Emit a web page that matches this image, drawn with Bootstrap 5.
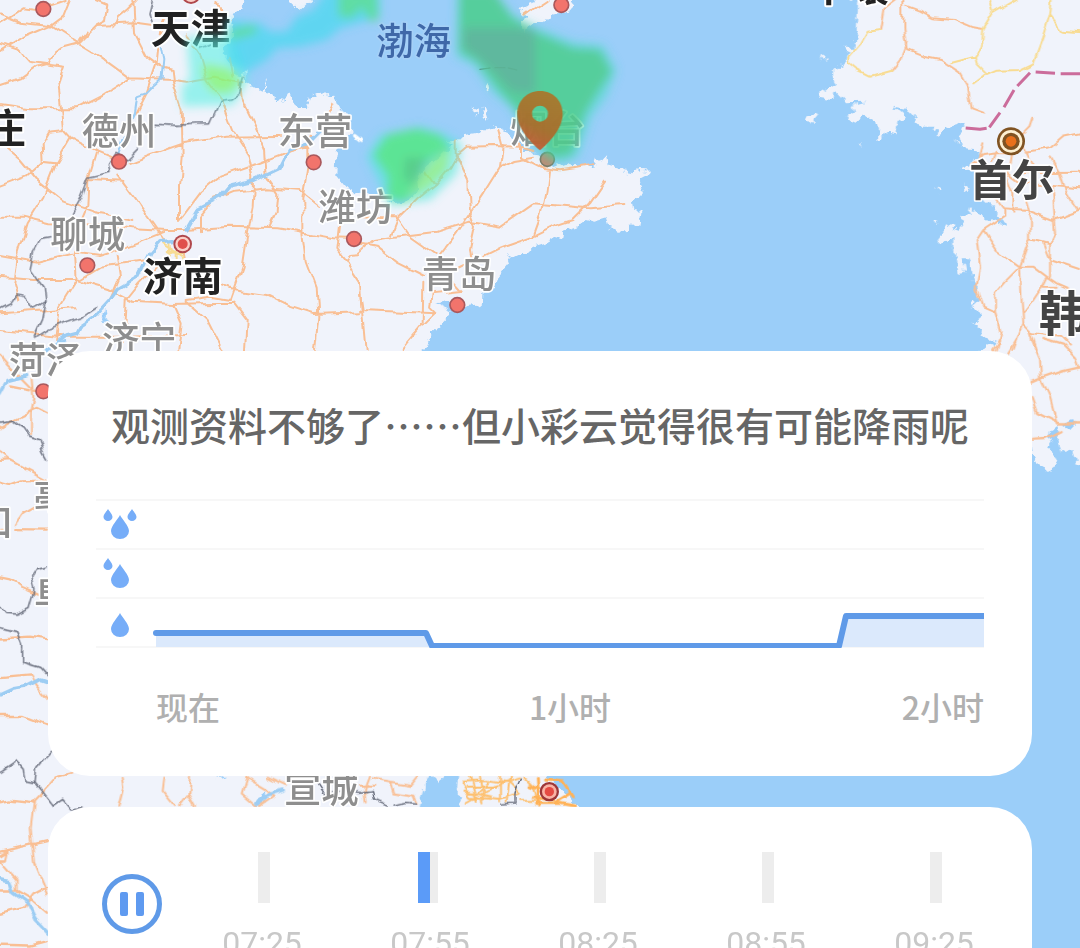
<!DOCTYPE html>
<html lang="zh-CN">
<head>
<meta charset="utf-8">
<meta name="viewport" content="width=device-width, initial-scale=1">
<title>降雨预报</title>
<link href="https://cdn.jsdelivr.net/npm/bootstrap@5.3.0/dist/css/bootstrap.min.css" rel="stylesheet">
<style>
  body { font-family: "Noto Sans CJK SC", "Noto Sans", sans-serif; background: #9bcef9; }
  .screen { padding: 351px 48px 0; gap: 31px; }
  .map { z-index: 0; }
  .map text { font-size: 112px; font-weight: 500; fill: #8e8e8e; stroke: #fff; stroke-width: 10px; stroke-linejoin: round; paint-order: stroke; }
  .map .city { fill: #222; font-weight: 700; font-size: 120px; stroke-width: 12px; }
  .map .abroad { fill: #444; font-weight: 700; font-size: 128px; }
  .map .country { font-size: 144px; }
  .map .sea { fill: #3f68a8; stroke: #a5d0f7; }
  .land { fill: #f0f3fb; }
  .lines { fill: none; stroke-linejoin: round; stroke-linecap: round; }
  .road { stroke: #f9bf94; stroke-width: 6; }
  .yroad { stroke: #f8dc93; stroke-width: 6; }
  .river { stroke: #9dcdf3; stroke-width: 10; }
  .border-line { stroke: #646978; stroke-width: 4; stroke-dasharray: 22 3; }
  .towns { fill: #f2746c; stroke: #a9585c; stroke-width: 5; }
  .panel { background: #fff; border-radius: 42px; z-index: 1; }
  .forecast { padding: 45px 48px 50px; }
  .headline { font-size: 39px; line-height: 56px; font-weight: 500; color: #666; margin-bottom: 47px; }
  .level { height: 49px; border-top: 2px solid #f7f7f7; padding: 8px 6px 0; }
  .chart-end { border-top: 2px solid #f7f7f7; }
  .axis { font-size: 32px; line-height: 40px; font-weight: 500; color: #b0b0b0; margin-top: 38px; padding-left: 60px; }
  .player { border-radius: 42px 42px 0 0; padding: 45px 12px 24px 54px; }
  .pause { width: 60px; height: 60px; margin-top: 22px; margin-right: 18px; }
  .tick-bar { width: 12px; height: 51px; background: #ededed; }
  .tick-now { width: 12px; height: 51px; background: #5b9bf8; right: 8px; top: 0; }
  .tick-time { font-family: Roboto, sans-serif; font-size: 32px; line-height: 40px; color: #c8c8c8; margin-top: 20px; margin-right: 4px; }
</style>
</head>
<body>
<main class="screen position-relative d-flex flex-column vh-100 overflow-hidden">

<svg class="map position-absolute top-0 start-0 w-100 h-100" viewBox="0 0 3240 2844" preserveAspectRatio="xMidYMin slice" role="img" aria-label="降雨地图">
  <defs>
    <filter id="soft" x="-20%" y="-20%" width="140%" height="140%"><feGaussianBlur stdDeviation="15"/></filter>
    <filter id="coast" x="0" y="0" width="3240" height="2844" filterUnits="userSpaceOnUse" color-interpolation-filters="sRGB"><feTurbulence type="fractalNoise" baseFrequency=".035" numOctaves="3" seed="4"/><feDisplacementMap in="SourceGraphic" scale="34" xChannelSelector="R" yChannelSelector="G"/></filter>
    <filter id="bends" x="-40" y="-40" width="3320" height="2924" filterUnits="userSpaceOnUse" color-interpolation-filters="sRGB"><feTurbulence type="fractalNoise" baseFrequency=".018" numOctaves="2" seed="9"/><feDisplacementMap in="SourceGraphic" scale="26" xChannelSelector="R" yChannelSelector="G"/></filter>
    <linearGradient id="pin" x1="0.6" y1="0" x2="0.3" y2="1"><stop offset="0" stop-color="#a9782c"/><stop offset=".6" stop-color="#a96d2c"/><stop offset="1" stop-color="#c45a38"/></linearGradient>
  </defs>
  <rect width="3240" height="2844" fill="#9bcef9"/>

  <g filter="url(#coast)">
  <g class="land">
    <path d="M-60 -60H728L722 22 735 35 700 40 690 90 690 130 660 150 690 190 718 235 740 215 738 248 760 262 785 275 802 238 795 270 820 285 826 305 840 290 850 305 870 280 885 305 883 322 912 330 925 290 932 284 950 290 975 282 990 292 1008 284 1020 320 1042 345 1060 400 1030 430 1010 460 1006 530 1030 560 1060 575 1130 590 1180 610 1215 605 1255 570 1250 530 1280 500 1340 455 1365 432 1332 425 1370 423 1390 405 1430 400 1440 388 1465 388 1490 382 1512 395 1535 400 1540 430 1560 425 1570 455 1610 460 1625 475 1670 500 1700 490 1730 502 1780 490 1785 475 1800 482 1815 466 1820 490 1860 500 1870 514 1900 520 1915 510 1960 512 1925 530 1918 550 1930 575 1915 590 1895 600 1900 630 1922 632 1915 670 1890 675 1890 692 1860 695 1820 680 1815 655 1780 665 1760 660 1730 682 1690 695 1685 722 1650 712 1645 725 1600 740 1560 760 1520 780 1524 792 1490 835 1480 860 1450 880 1448 915 1400 922 1372 930 1350 935 1348 950 1320 980 1295 1000 1280 1040 1255 1060V2300H1620L1690 2370 1740 2430V2900H-60Z"/>
    <path d="M1555 30 1600 12 1612 -30H1725L1715 12 1710 35 1665 45 1640 60 1600 70 1570 92 1556 78 1580 52ZM866 0 880 12 902 32 935 0V-40H866ZM1455 260l12-4 4 20-10 4zM1434 345l-20-14 6-6 14 6zM1444 325l14 8 4 26-10-4z"/>
    <path transform="translate(2160)" d="M415 -60 415 0 410 90 420 115 400 125 405 140 370 140 385 160 380 180 340 220 350 255 290 290 330 297 350 280 375 307 437 305 400 315 405 338 375 350 410 365 440 350 480 380 478 405 460 425 490 408 500 395 530 400 532 365 558 350 525 320 575 330 600 380 640 380 655 405 670 385 735 365 740 385 720 395 730 450 780 455 770 480 725 500 760 510 790 600 835 640 855 680 835 675 800 655 750 625 745 645 715 650 735 665 715 690 675 675 680 690 655 710 660 730 700 715 700 770 710 765 715 825 735 822 725 775 742 775 765 850 770 900 752 915 780 925 785 950 760 970 790 985 785 1010 830 1025 775 1050 930 1320 935 1370 970 1400 990 1420 1005 1375 980 1345 1010 1310 1030 1360 1060 1350 1070 1395 1120 1380V-60ZM298 165l20 12-8 5zM260 355l32-14-15 35zM705 415l17 22-12-5zM423 425l8-8-8 22zM650 560l14 10-12 4zM738 550l14 14-14 8zM637 668l16 0-10 6z"/>
  </g>
  <g fill="#9bcef9"><path d="M1255 2440 1275 2340 1290 2320 1320 2350 1340 2320H1375L1370 2380 1390 2400 1380 2440ZM645 2330q15 12 30 0zM315 920l8 18 6 32-24 2zM770 2420l8-32 18-12 4 20-20 24zM1310 905l30-8 30 8 0 25-25 5z"/><path d="M3185 1275 3220 1255 3230 1270 3210 1290ZM3150 1290 3170 1275 3180 1300 3165 1330 3145 1315Z"/></g>
  </g>

  <g class="lines" filter="url(#bends)">
    <g class="road">
      <path d="M0 70 70 25 110 30 200 0M0 40 60 65 150 75 235 130 300 170 390 235 520 240 560 245 640 230 730 250M0 155 80 105 150 75M235 130 290 75 400 70 460 78M210 0 190 50 150 80M290 0 325 15 318 60 290 75M340 80 350 55 380 30 410 0M0 130 60 150 90 185 195 200M0 255 60 235 110 200 150 190 145 175 195 140 235 130 260 95M195 200 178 250 185 310 192 390 215 415 290 455 350 480M0 312 90 325 230 325 310 285 390 235M400 0 405 100 440 170 480 200 515 210 520 250 545 330 548 470 540 560 540 660M500 40 480 100 470 190 440 280 410 340M192 390 145 395 125 430 128 485 168 490M0 430 60 480 110 540 190 605 290 640 400 660M0 560 80 530 130 485M215 415 165 500 130 590 80 670 50 770 40 850 55 900M355 530 400 590 450 660 495 725M385 490 450 465 550 430 680 410 840 408M290 455 265 540 370 545M265 540 262 620 240 670 225 760 230 840 180 920 165 1050M0 650 70 650 150 670 250 672 400 685 500 690 548 690 690 680 830 685 920 700 1000 715 1060 717M0 765 110 785 230 755 300 765 380 740 495 695M0 830 100 840 230 840 330 870 400 905 520 912 600 910 700 908M0 940 150 930 230 925M235 840 300 800 440 780M350 765 360 830 330 900M480 790 420 850 380 900 375 1000 350 1050M548 740 560 810 650 850 700 870 800 885 870 920 940 942 1080 937M560 900 630 890 690 900 725 800 740 700 755 620 760 530 745 460 700 390 665 300 620 240 600 170 560 110M540 660 600 580 660 530 760 495 850 460 925 440 935 410M600 700 600 650 640 600 700 575 800 565 900 572 960 620M720 240 725 300 770 390 795 450 800 530 835 580 830 640 810 685M925 440 925 500 910 600 910 700 920 780 950 860 955 950 945 1050M1020 680 1012 750 1040 785 1060 820 1080 850M520 912 545 970 535 1050M560 905 620 960 665 1050M700 908 740 960 735 1050M960 390 1000 310M690 180 700 230M640 0 690 60M0 990 200 1010 380 1010 560 1005M1040 785 1050 762 1080 760M1080 850 1085 930"/>
      <path transform="translate(1080)" d="M0 755 40 720 90 712 150 705 230 695 330 665 420 680 520 610 690 625 790 615M0 730 50 740 110 785 190 825M0 650 50 655 110 655 145 705 230 765M90 712 110 660 170 600 225 555 270 500 290 465 320 440 400 438 480 440 520 450M200 515 225 555M290 465 325 540 330 640 345 680 330 750 335 775M415 390 428 440 420 500 370 580 330 640 290 700 240 765M420 500 460 480 520 470M480 430 480 470 540 500 600 508 650 500 700 490M567 510 560 570 545 640 520 710M370 770 420 745 520 710 580 680 640 660 690 610 735 545M290 810 330 790M270 830 305 870 215 880 210 920 230 940 0 930M190 845 188 975 125 1050M230 940 190 980M0 880 10 940 20 1050M490 50 530 20 560 0M290 430 290 465"/>
      <path transform="translate(2160)" d="M530 0 490 30 480 90M550 0 550 80 560 150 610 170 660 180 720 220 745 265 755 325 790 338M560 20 600 35 640 55 700 60 760 85 790 90M560 130 540 180 515 212M940 350 930 380 910 400 915 440 940 490M920 455 990 445 1030 410 1080 400M750 490 790 465 830 460 890 460M790 430 780 470M820 480 830 455M870 470 860 530 880 580 880 635M830 600 850 625 920 630 1000 660 1080 630M995 475 1020 520 1040 580 1070 630M860 520 900 550 1080 565M890 520 1080 518M995 560 1000 640 1005 700 990 730 930 715 900 800 905 900 910 970 880 1050M910 590 930 660 930 715M850 625 850 650 790 690 770 720 780 800 770 860 790 920 825 935 825 880 850 850 900 800 940 800 980 830 960 870 940 900 910 940M790 690 830 750 900 800M970 730 990 780 1080 810M990 830 990 730M980 830 1010 850 1045 865M825 935 845 1000 830 1050M910 970 940 1000 1020 1010 1050 1040M930 990 950 1050M1010 860 970 860"/>
      <path transform="translate(0 1020) scale(1 1.163)" d="M0 40 20 60 100 130 110 132M95 100 100 150 90 190 90 240M0 225 40 205 110 175 144 190M30 120 90 130M0 290 30 310 140 362 60 365 30 375 0 368M0 312 30 310M45 475 70 445 100 430M45 488 144 489M0 485 20 485M0 610 30 615 70 640 118 658M0 770 90 765 144 772M0 872 95 865 110 890 144 925M0 970 70 970 144 995M0 1190 30 1185 100 1192 130 1165 170 1125 215 1115M105 1190 95 1260 105 1350 144 1430M0 1320 144 1292M0 1330 20 1320 15 1340 0 1340M0 1340 50 1390 50 1420 0 1420M0 1480 70 1465 100 1430 144 1410M50 1420 90 1440 144 1480M0 1560 90 1562 144 1550"/>
      <path transform="translate(2880 1020) scale(1 1.163)" d="M100 25 120 0M145 35 170 0M215 0 240 50 243 100 215 110M243 100 310 80 360 70M250 0 310 15 345 45 355 70M243 100 270 150 290 215 360 215M215 150 230 185 300 215M215 257 260 255 305 235"/>
      <path transform="translate(120 2280)" d="M245 50 250 80 235 140M370 50 365 90 405 138M450 50 445 100 465 138M445 105 420 138M620 50 605 100 650 138M620 55 670 85 700 110 660 138M685 50 740 75M990 50 975 90 980 130M1000 55 1050 65 1110 75 1130 50M1050 65 1060 100 1120 110 1130 130M960 80 1000 80"/>
    </g>
    <g class="yroad">
      <path transform="translate(2160)" d="M480 90 440 95 420 130 385 170 385 190 410 210 450 230 515 212M810 0 820 40 790 90 785 140 765 170 770 190 800 220 760 250M820 40 890 0M690 190 765 170M800 225 830 212 900 210 940 190 970 110 990 45 995 0M990 45 1030 95 1080 100"/>
      <path d="M490 730 550 770M500 750 550 760M495 765 555 740M505 725 510 780M530 730 530 785M548 770 560 810"/>
      <g transform="translate(120 2280)" stroke="#fdc070"><path d="M1265 65 1340 60 1410 70 1440 100 1380 120 1290 110 1265 70M1290 50 1310 120M1320 50 1330 130M1350 60 1310 100 1270 95M1280 80H1370M1285 95 1350 110M1380 50V130M1410 50 1400 130M1280 125 1360 80 1440 55M1450 50 1480 80 1500 138M1440 120 1500 120"/><path stroke="#ffb257" stroke-width="9" d="M1470 80 1500 90 1490 130 1560 130 1600 138M1480 110 1540 120M1495 55 1500 138M1520 60 1570 65 1600 110M1540 130 1590 100"/></g>
    </g>
    <g class="river">
      <path d="M485 140 493 180 488 235 460 260 440 280 412 290 405 340 370 410 350 470" stroke-width="6"/>
      <path d="M960 395 920 435 865 450 835 510 760 545 690 560 660 595 590 630 555 690M515 722 480 725 450 760 430 800 415 830 355 865 330 900 285 950 240 980 230 1000 190 1010 140 1050"/>
      <path transform="translate(0 1020) scale(1 1.163)" d="M0 135 20 105 80 92M130 38 150 20 190 5M0 915 40 900 75 895 120 875 144 882M0 1390 30 1395 40 1425 80 1450 105 1495 144 1530"/>
      <path d="M770 2410 800 2385 850 2370"/><path d="M1064 404 1082 418" stroke="#fff"/>
    </g>
    <g class="border-line">
      <path d="M460 0 450 40 465 80M730 235 718 280 690 300 660 305 628 372 590 372 530 376 465 373M415 445 380 480 345 460 325 490 330 520 265 535 245 590 215 645M150 710 125 715 100 760 90 810 130 865 135 905 100 925 80 890 50 885 30 915 0 930M135 905 125 955 100 1010M100 1015 150 985 200 965 245 950 290 920M575 125 600 145 650 125"/>
      <path transform="translate(0 1020) scale(1 1.163)" d="M0 212 40 207 70 225 85 245 120 255 130 290 144 312M144 583 110 590 95 610 105 645 90 690 50 707 20 705 0 685M0 742 50 752 65 785 65 830 120 845 144 868M0 1115 50 1085 70 1105 75 1135 105 1140 110 1105 155 1060M105 1140 160 1200 185 1185 210 1210 240 1205"/>
      <path transform="translate(120 2280)" d="M830 70 850 100 920 95 960 100 995 95 1000 120 1045 138M1065 138 1100 130 1130 132M1385 138 1425 135 1425 100 1445 55"/>
    </g>
  </g>
  <g class="lines">
    <path class="border-line" d="M1440 208 1470 204M1485 203H1515M1525 204 1550 210"/>
    <path d="M2897 384 2940 388 2960 385M2968 382 3000 338M3012 322 3042 270M3052 258 3090 218M3107 216 3165 220M3182 221H3240" stroke="#cb6c9b" stroke-width="9" stroke-linecap="butt"/>
  </g>

  <g class="towns">
    <circle cx="130" cy="27" r="22"/><circle cx="357" cy="485" r="22"/><circle cx="941" cy="487" r="22"/><circle cx="262" cy="796" r="22"/><circle cx="1062" cy="717" r="22"/><circle cx="1372" cy="915" r="22"/><circle cx="1684" cy="15" r="22"/><circle cx="130" cy="1174" r="22"/><circle cx="1642" cy="478" r="21" fill="#b98f78" stroke="#7d7a68"/>
    <g stroke="none"><circle cx="573" cy="-16" r="28" fill="#b0484c"/><circle cx="573" cy="-16" r="22" fill="#fbd0c8"/>
    <circle cx="548" cy="732" r="28" fill="#b0484c"/><circle cx="548" cy="732" r="22" fill="#fbd0c8"/><circle cx="548" cy="732" r="15" fill="#e0504b"/>
    <circle cx="1648" cy="2375" r="29" fill="#9c3638"/><circle cx="1648" cy="2375" r="22" fill="#f9b3a5"/><circle cx="1648" cy="2375" r="14" fill="#e54b43"/>
    <circle cx="3033" cy="424" r="42" fill="#805322"/><circle cx="3033" cy="424" r="34" fill="#fdf0d2"/><circle cx="3033" cy="424" r="26" fill="#805322"/><circle cx="3033" cy="424" r="16" fill="#e8701c"/></g>
  </g>

  <g>
    <text x="245" y="434">德州</text><text x="833" y="434">东营</text><text x="955" y="664">潍坊</text><text x="151" y="743">聊城</text>
    <text x="306" y="1062">济宁</text><text x="26" y="1122">菏泽</text><text x="1265" y="865">青岛</text><text x="1531" y="428">烟台</text>
    <text x="100" y="1534">亳州</text><text x="-184" y="1608">周口</text><text x="102" y="1824">阜阳</text><text x="852" y="2410">宣城</text>
    <text class="city" x="452" y="128">天津</text><text class="city" x="-162" y="430">家庄</text><text class="city" x="428" y="874">济南</text>
    <text class="sea" x="1129" y="164">渤海</text>
    <text class="abroad" x="2908" y="588">首尔</text><text class="abroad country" x="3116" y="992">韩国</text><text class="city" x="2426" y="4">平壤</text>
  </g>

  <g filter="url(#soft)">
    <path d="M560 110 700 110 745 240 700 315 545 320 545 255 570 240Z" fill="#5cf0e4" opacity=".6"/>
    <path d="M680 60 780 70 810 95 860 95 890 50 940 30 980 -30H1140V50L1020 85 980 120 900 140 830 145 800 180 740 215 690 190Z" fill="#46d8ee" opacity=".7"/>
    <path d="M605 190 690 205 725 245 690 280 640 280 610 240Z" fill="#93f55c" opacity=".65"/>
    <path d="M690 90 765 75 770 100 690 120ZM1015 -30H1130L1135 60 1110 65 1085 20 1060 55 1015 50Z" fill="#5ee081" opacity=".7"/>
    <path d="M1370 -30H1480L1540 45 1620 85 1720 125 1810 135 1850 210 1820 290 1775 350 1735 470 1680 495 1610 450 1530 320 1480 280 1420 195 1368 170Z" fill="#42e0c8" opacity=".5"/>
    <path d="M1380 -30H1480L1535 50 1600 92 1720 145 1800 150 1835 215 1795 275 1755 340 1715 465 1650 475 1550 330 1500 275 1430 185 1378 155Z" fill="#4fcb84" opacity=".75"/>
    <path d="M1390 85H1605V280L1535 275 1480 215 1430 170 1390 145Z" fill="#68a2a0" opacity=".5"/>
    <path d="M1100 470 1140 405 1260 380 1330 400 1385 430 1370 520 1290 600 1170 615Z" fill="#4ee8da" opacity=".6"/>
    <path d="M1120 465 1160 405 1250 385 1320 405 1350 440 1270 490 1240 560 1210 608 1160 590 1165 530Z" fill="#5ce48c" opacity=".9"/>
    <path d="M1350 440 1340 510 1290 560 1215 605 1250 545 1290 490Z" fill="#9bf060" opacity=".6"/>
    <path d="M1215 470 1285 475 1260 530 1235 560 1210 530Z" fill="#56b884" opacity=".5"/>
  </g>
  <path fill="url(#pin)" fill-rule="evenodd" opacity=".95" d="M1620 273C1580 273 1552 303 1552 341C1552 385 1590 425 1620 451C1650 425 1688 385 1688 341C1688 303 1660 273 1620 273ZM1620 317a24 24 0 1 1 0 48a24 24 0 1 1 0-48Z"/>
</svg>

<section class="panel forecast flex-shrink-0">
  <h1 class="headline text-center">观测资料不够了……但小彩云觉得很有可能降雨呢</h1>
  <div class="position-relative">
    <div class="level"><svg class="d-block" width="36" height="32" viewBox="0 0 36 32" fill="#76adf8" role="img" aria-label="大雨"><path d="M18 6C20 10 27 17 27 22A9 8 0 0 1 9 22C9 17 16 10 18 6Z"/><path id="small-drop" d="M6 0C7 2 10.500 5 10.500 8A4.500 4 0 0 1 1.500 8C1.500 5 5 2 6 0Z"/><use href="#small-drop" x="24"/></svg></div>
    <div class="level"><svg class="d-block" width="36" height="32" viewBox="0 0 36 32" fill="#76adf8" role="img" aria-label="中雨"><path d="M18 6C20 10 27 17 27 22A9 8 0 0 1 9 22C9 17 16 10 18 6Z"/><use href="#small-drop"/></svg></div>
    <div class="level"><svg class="d-block" width="36" height="32" viewBox="0 0 36 32" fill="#76adf8" role="img" aria-label="小雨"><path d="M18 6C20 10 27 17 27 22A9 8 0 0 1 9 22C9 17 16 10 18 6Z"/></svg></div>
    <div class="chart-end"></div>
    <svg class="position-absolute top-0 start-0 w-100 h-100" viewBox="0 0 888 149" preserveAspectRatio="none" role="img" aria-label="未来两小时降雨强度">
      <path d="M60 134H330L336 148H60ZM743 148 749 117H888V148Z" fill="#dbe9fc"/>
      <path d="M60 134H330L336 147H743L750 117H892" fill="none" stroke="#5f9ae8" stroke-width="6" stroke-linecap="round" stroke-linejoin="round"/>
    </svg>
  </div>
  <div class="axis"><div class="row g-0"><span class="col text-start">现在</span><span class="col text-center">1小时</span><span class="col text-end">2小时</span></div></div>
</section>

<section class="panel player d-flex align-items-start flex-shrink-0">
  <button type="button" class="pause btn p-0 border-0 rounded-circle flex-shrink-0" aria-label="暂停">
    <svg class="d-block" width="60" height="60" viewBox="0 0 60 60"><circle cx="30" cy="30" r="27.500" fill="none" stroke="#5f9ae8" stroke-width="5"/><rect x="18" y="18" width="8" height="24" rx="2" fill="#5f9af0"/><rect x="34" y="18" width="8" height="24" rx="2" fill="#5f9af0"/></svg>
  </button>
  <div class="row g-0 flex-grow-1 text-center">
    <div class="col"><div class="tick-bar mx-auto"></div><div class="tick-time">07:25</div></div>
    <div class="col"><div class="tick-bar mx-auto position-relative"><div class="tick-now position-absolute"></div></div><div class="tick-time">07:55</div></div>
    <div class="col"><div class="tick-bar mx-auto"></div><div class="tick-time">08:25</div></div>
    <div class="col"><div class="tick-bar mx-auto"></div><div class="tick-time">08:55</div></div>
    <div class="col"><div class="tick-bar mx-auto"></div><div class="tick-time">09:25</div></div>
  </div>
</section>
</main>
<script src="https://cdn.jsdelivr.net/npm/bootstrap@5.3.0/dist/js/bootstrap.bundle.min.js"></script>
</body>
</html>
